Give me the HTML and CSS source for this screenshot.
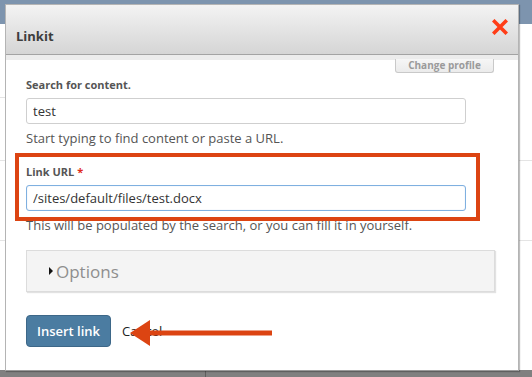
FILE: index.html
```html
<!DOCTYPE html>
<html lang="en">
<head>
  <meta charset="UTF-8" />
  <title>Linkit</title>
  <link rel="stylesheet" href="styles.css">
</head>
<body>
  <div class="page">
    <div class="toolbar"></div>
    <div class="page-rows">
      <div class="row r1"></div>
      <div class="row r2"></div>
      <div class="row r3"></div>
    </div>
    <div class="footer-bar"><span class="split"></span></div>
  </div>

  <div class="dialog">
    <div class="titlebar">
      <span class="title">Linkit</span>
      <button class="close" title="Close">
        <svg width="16" height="16" viewBox="0 0 16 16">
          <path d="M2.5 2.5 L13.5 13.5 M13.5 2.5 L2.5 13.5" stroke="#ff3d17" stroke-width="3.6" stroke-linecap="square"/>
        </svg>
      </button>
    </div>
    <div class="profile-bar"><span class="profile-tab">Change profile</span></div>

    <div class="dialog-body">
      <label class="field-label">Search for content.</label>
      <input class="text-input" type="text" value="test">
      <div class="desc">Start typing to find content or paste a URL.</div>

      <label class="field-label url-label">Link URL <span class="req">*</span></label>
      <input class="text-input focused" type="text" value="/sites/default/files/test.docx">
      <div class="desc">This will be populated by the search, or you can fill it in yourself.</div>

      <div class="options"><span class="caret"></span>Options</div>

      <div class="actions">
        <button class="btn-primary">Insert link</button>
        <a class="cancel" href="#">Cancel</a>
      </div>
    </div>
  </div>

  <!-- annotations -->
  <div class="mark-box"></div>
  <svg class="mark-arrow" width="142" height="28" viewBox="0 0 142 28">
    <polygon points="0,13 20,0 20,26" fill="#dc4412"/>
    <rect x="18" y="10.5" width="124" height="5" fill="#dc4412"/>
  </svg>
</body>
</html>
```

FILE: styles.css
```css
* { box-sizing: border-box; margin: 0; padding: 0; }
html, body { width: 532px; height: 377px; overflow: hidden; }
body { font-family: 'Open Sans', 'DejaVu Sans', sans-serif; background: #fff; color: #333; position: relative; }

/* page behind the dialog */
.page { display: flex; flex-direction: column; height: 377px; }
.toolbar { height: 24px; background: #7d94ae; }
.page-rows { flex: 1; position: relative; }
.row { height: 1px; background: #e4e4e4; margin-left: 0; }
.r1 { margin-top: 73px; width: 6px; }
.r2 { margin-top: 62px; width: 532px; }
.r3 { margin-top: 79px; width: 532px; }
.footer-bar { height: 7px; background: #808080; display: flex; }
.split { width: 1px; margin-left: 205px; background: #5e5e5e; }

/* dialog overlay */
.dialog {
  position: absolute; left: 5px; top: 4px;
  width: 514px; height: 367px;
  background: #fff;
  border: 1px solid #b4b4b4;
  border-bottom-color: #9a9a9a;
  box-shadow: 1px 1px 1px rgba(0,0,0,0.25);
}
.titlebar {
  height: 50px;
  display: flex; align-items: center; justify-content: space-between;
  padding: 0 9px 0 10px;
  background: linear-gradient(#f3f3f3, #d5d5d5);
  border-bottom: 1px solid #a3a3a3;
}
.title { font-size: 13px; font-weight: 700; color: #3d3d3d; margin-top: 13px; }
.close { border: 0; background: none; width: 16px; height: 16px; margin-right: 1px; margin-bottom: 5px; }
.close svg { display: block; }

.profile-bar {
  display: flex; justify-content: flex-end;
  padding-right: 24px;
  background: linear-gradient(#ececec 5px, #fff 5px);
}
.profile-tab {
  margin-top: 4px;
  height: 14px; width: 99px;
  font-size: 10px; font-weight: 700; line-height: 12px; color: #9a9a9a;
  text-align: center;
  background: linear-gradient(#f6f6f6, #ebebeb);
  border: 1px solid #c9c9c9; border-top: 0;
  border-radius: 0 0 3px 3px;
}

.dialog-body { padding: 0 20px; display: flex; flex-direction: column; }
.field-label { display: block; margin-top: 4px; font-size: 11px; font-weight: 700; line-height: 16px; color: #555; }
.url-label { margin-top: 17px; }
.req { color: #e02a1c; }
.text-input {
  display: block; margin-top: 5px;
  width: 440px; height: 26px;
  padding: 0 6px;
  border: 1px solid #cfcfcf; border-radius: 3px;
  font-family: inherit; font-size: 13px; color: #333;
  background: #fff;
}
.text-input.focused { border-color: #7fb0e0; box-shadow: inset 0 0 1px rgba(120,170,220,0.5); }
.desc { margin-top: 5px; font-size: 13px; line-height: 18px; color: #555; }

.options {
  margin-top: 16px;
  width: 469px; height: 42px;
  display: flex; align-items: center;
  padding-left: 22px;
  background: #f4f4f4;
  border: 1px solid #dcdcdc;
  box-shadow: 1px 1px 1px #e2e2e2;
  font-size: 17px; color: #8e8e8e;
}
.caret {
  width: 0; height: 0; margin-right: 3px;
  border-left: 4px solid #111; border-top: 4px solid transparent; border-bottom: 4px solid transparent;
}

.actions { margin-top: 23px; display: flex; align-items: center; gap: 11px; }
.btn-primary {
  width: 85px; height: 32px;
  background: #4b7ca1; border: 1px solid #3d6788; border-radius: 4px;
  color: #fff; font-family: inherit; font-size: 13px; font-weight: 600;
}
.cancel { color: #222; font-size: 13px; text-decoration: none; }

/* red annotations drawn over the screenshot */
.mark-box {
  position: absolute; left: 15px; top: 153px;
  width: 465px; height: 68px;
  border: 4px solid #dc4412;
}
.mark-arrow { position: absolute; left: 130px; top: 320px; }
```
